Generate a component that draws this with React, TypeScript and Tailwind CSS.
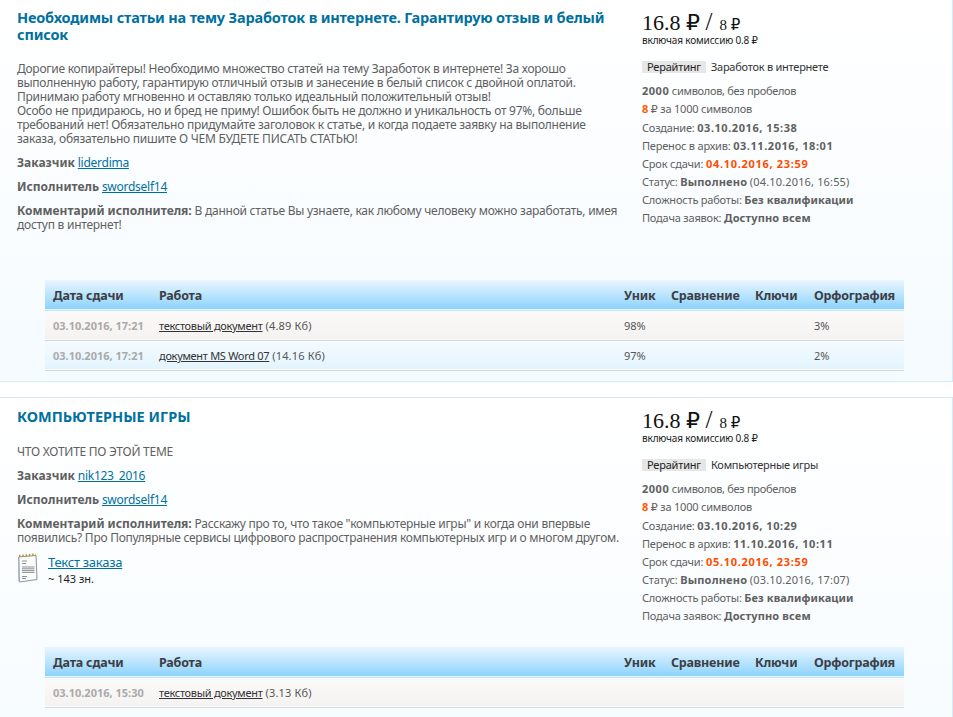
import React from 'react';

const linkCls = 'text-[#00719e] underline';
const Rub = () => <span className="font-['DejaVu_Sans',sans-serif]">₽</span>;

interface Work {
  date: string;
  name: string;
  size: string;
  uniq?: string;
  spell?: string;
}

interface Info {
  price: string;
  tag: string;
  created: string;
  archive: string;
  deadline: string;
  done: string;
}

const NotepadIcon: React.FC = () => (
  <svg width="21" height="30" viewBox="0 0 21 30" className="shrink-0">
    <path d="M1.5 4 L19 2.5 L20 26.5 L2.5 29 Z" fill="#fbfbf8" stroke="#8a94a3" strokeWidth="1" />
    <path d="M2 28.5 L1.8 4.5" stroke="#a9b4c4" strokeWidth="1.5" />
    <path d="M2 3 L19 1.5" stroke="#b8952f" strokeWidth="2.2" strokeDasharray="1.5 1.8" />
    <path d="M5 8 H10 M5 10.5 H9 M5 14 H17.5 M5 15.8 H17.5 M5 17.6 H17.5 M5 19.4 H17.5 M5 23.5 H10 M5 25.5 H9" stroke="#7d8590" strokeWidth="0.9" />
  </svg>
);

const InfoColumn: React.FC<{ info: Info }> = ({ info }) => (
  <div className="w-[290px] shrink-0 text-[11px] tracking-[-0.2px] text-[#606060]">
    <div className="flex items-baseline h-[25px] font-['Liberation_Serif',serif] tracking-normal text-[#111]">
      <span className="text-[22px] leading-[25px]">{info.price} <Rub /> <span className="text-[25px]">/</span></span>
      <span className="text-[15px] ml-[7px]">8 <Rub /></span>
    </div>
    <div className="text-[10px] leading-[13px] tracking-[-0.15px] text-[#222]">включая комиссию 0.8 <Rub /></div>
    <div className="flex items-center mt-[13px] h-[14px] text-[#333]">
      <span className="bg-[#e6e6e6] text-[#222] px-[5px] leading-[12px]">Рерайтинг</span>
      <span className="ml-[5px] tracking-[-0.25px]">{info.tag}</span>
    </div>
    <div className="mt-[8px] leading-[18px]">
      <div><b className="tracking-[0.5px]">2000</b> <span className="tracking-[-0.3px]">символов, без пробелов</span></div>
      <div><b className="text-[#ff5a00]">8</b> <Rub /> за 1000 символов</div>
      <div>Создание: <b className="tracking-[0.55px]">{info.created}</b></div>
      <div>Перенос в архив: <b className="tracking-[0.55px]">{info.archive}</b></div>
      <div>Срок сдачи: <b className="tracking-[0.7px] text-[#ff4d00]">{info.deadline}</b></div>
      <div>Статус: <b className="tracking-[0.2px]">Выполнено</b> <span className="tracking-[0.15px]">({info.done})</span></div>
      <div>Сложность работы: <b className="tracking-[0.1px]">Без квалификации</b></div>
      <div>Подача заявок: <b className="tracking-[0.15px]">Доступно всем</b></div>
    </div>
  </div>
);

const WorksTable: React.FC<{ works: Work[] }> = ({ works }) => (
  <table className="ml-[45px] w-[859px] table-fixed border-collapse">
    <colgroup>
      <col className="w-[106px]" />
      <col className="w-[465px]" />
      <col className="w-[47px]" />
      <col className="w-[84px]" />
      <col className="w-[59px]" />
      <col className="w-[98px]" />
    </colgroup>
    <thead>
      <tr className="h-[30px] bg-gradient-to-b from-[#e8f6fe] to-[#8cd3fc] text-[#3d3d44] border-b border-[#c5e6fa]">
        {['Дата сдачи', 'Работа', 'Уник', 'Сравнение', 'Ключи', 'Орфография'].map(h => (
          <th key={h} className="pl-[8px] pt-[2px] text-left text-[12.5px] tracking-[-0.2px] font-bold whitespace-nowrap">{h}</th>
        ))}
      </tr>
    </thead>
    <tbody>
      {works.map((w, i) => (
        <tr
          key={w.name}
          className={`h-[30px] border-b border-[#d3dade] text-[11px] text-[#555] ${i % 2 === 0 ? 'bg-gradient-to-b from-[#fbfafa] to-[#f5f3f1]' : 'bg-gradient-to-b from-[#f5fbff] to-[#e3f4fe]'}`}
        >
          <td className="pl-[8px] pt-[2px] font-bold text-[#aaa] whitespace-nowrap">{w.date}</td>
          <td className="pl-[8px] pt-[2px]">
            <span className="text-[#333] underline tracking-[-0.3px]">{w.name}</span> <span className="tracking-[0.2px]">({w.size})</span>
          </td>
          <td className="pl-[8px] pt-[2px]">{w.uniq}</td>
          <td />
          <td />
          <td className="pl-[8px] pt-[2px]">{w.spell}</td>
        </tr>
      ))}
    </tbody>
  </table>
);

const App: React.FC = () => (
  <div className="w-[953px] h-[717px] overflow-hidden bg-white font-['Noto_Sans',sans-serif] text-[12px] leading-[14px] text-[#606060]">
    {/* first order */}
    <section className="h-[382px] border-r border-b border-[#d3ecfb] bg-gradient-to-b from-white to-[#f5fbff]">
      <div className="flex h-[280px] pt-[9px]">
        <div className="w-[642px] shrink-0 pl-[17px] tracking-[-0.26px] [&_b]:tracking-normal">
          <h2 className="text-[#00719e] text-[14.5px] leading-[17px] tracking-[-0.18px] font-bold whitespace-nowrap">
            Необходимы статьи на тему Заработок в интернете. Гарантирую отзыв и белый<br />список
          </h2>
          <p className="mt-[19px] whitespace-nowrap">
            Дорогие копирайтеры! Необходимо множество статей на тему Заработок в интернете! За хорошо<br />
            выполненную работу, гарантирую отличный отзыв и занесение в белый список с двойной оплатой.<br />
            Принимаю работу мгновенно и оставляю только идеальный положительный отзыв!<br />
            Особо не придираюсь, но и бред не приму! Ошибок быть не должно и уникальность от 97%, больше<br />
            требований нет! Обязательно придумайте заголовок к статье, и когда подаете заявку на выполнение<br />
            заказа, обязательно пишите О ЧЕМ БУДЕТЕ ПИСАТЬ СТАТЬЮ!
          </p>
          <p className="mt-[10px]"><b>Заказчик</b> <a className={linkCls}>liderdima</a></p>
          <p className="mt-[10px]"><b>Исполнитель</b> <a className={linkCls}>swordself14</a></p>
          <p className="mt-[10px] whitespace-nowrap">
            <b>Комментарий исполнителя:</b> В данной статье Вы узнаете, как любому человеку можно заработать, имея<br />доступ в интернет!
          </p>
        </div>
        <InfoColumn
          info={{
            price: '16.8',
            tag: 'Заработок в интернете',
            created: '03.10.2016, 15:38',
            archive: '03.11.2016, 18:01',
            deadline: '04.10.2016, 23:59',
            done: '04.10.2016, 16:55',
          }}
        />
      </div>
      <WorksTable
        works={[
          { date: '03.10.2016, 17:21', name: 'текстовый документ', size: '4.89 Кб', uniq: '98%', spell: '3%' },
          { date: '03.10.2016, 17:21', name: 'документ MS Word 07', size: '14.16 Кб', uniq: '97%', spell: '2%' },
        ]}
      />
    </section>

    {/* second order */}
    <section className="mt-[15px] h-[400px] border-t border-r border-[#d3ecfb] bg-gradient-to-b from-white to-[#f5fbff]">
      <div className="flex h-[249px] pt-[9px]">
        <div className="w-[642px] shrink-0 pl-[17px] tracking-[-0.26px] [&_b]:tracking-normal">
          <h2 className="text-[#00719e] text-[14.5px] leading-[17px] tracking-normal font-bold pt-[1px]">КОМПЬЮТЕРНЫЕ ИГРЫ</h2>
          <p className="mt-[20px]">ЧТО ХОТИТЕ ПО ЭТОЙ ТЕМЕ</p>
          <p className="mt-[10px]"><b>Заказчик</b> <a className={linkCls}>nik123_2016</a></p>
          <p className="mt-[10px]"><b>Исполнитель</b> <a className={linkCls}>swordself14</a></p>
          <p className="mt-[10px] whitespace-nowrap">
            <b>Комментарий исполнителя:</b> Расскажу про то, что такое "компьютерные игры" и когда они впервые<br />
            появились? Про Популярные сервисы цифрового распространения компьютерных игр и о многом другом.
          </p>
          <div className="flex mt-[8px]">
            <NotepadIcon />
            <div className="ml-[10px]">
              <a className={`${linkCls} text-[13px] leading-[18px] block`}>Текст заказа</a>
              <div className="text-[11px] text-[#222] leading-[15px] tracking-normal">~ 143 зн.</div>
            </div>
          </div>
        </div>
        <InfoColumn
          info={{
            price: '16.8',
            tag: 'Компьютерные игры',
            created: '03.10.2016, 10:29',
            archive: '11.10.2016, 10:11',
            deadline: '05.10.2016, 23:59',
            done: '03.10.2016, 17:07',
          }}
        />
      </div>
      <WorksTable works={[{ date: '03.10.2016, 15:30', name: 'текстовый документ', size: '3.13 Кб' }]} />
    </section>
  </div>
);

export default App;
